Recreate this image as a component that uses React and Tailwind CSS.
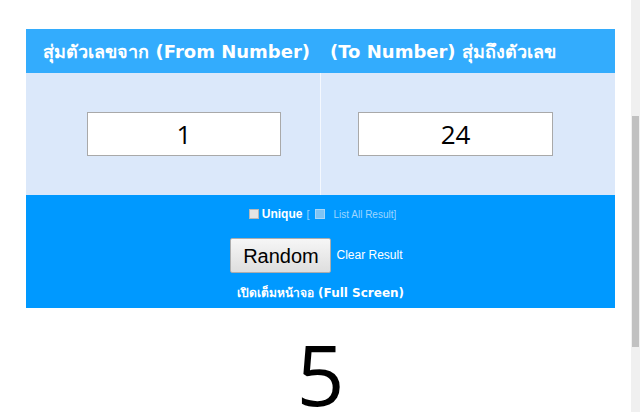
import React, { useState } from 'react';

// Random number picker — from/to inputs, options and the drawn result
export default function App() {
  const [from, setFrom] = useState('1');
  const [to, setTo] = useState('24');
  const [unique, setUnique] = useState(false);
  const [result, setResult] = useState(5);

  function roll() {
    const a = parseInt(from, 10) || 0;
    const b = parseInt(to, 10) || 0;
    const lo = Math.min(a, b);
    const hi = Math.max(a, b);
    setResult(lo + Math.floor(Math.random() * (hi - lo + 1)));
  }

  return (
    <div className="w-[640px] h-[412px] flex overflow-hidden bg-white font-['Liberation_Sans','DejaVu_Sans',sans-serif]">
      {/* ── Page ─────────────────────────────────────────── */}
      <div className="flex-1 pt-[29px] pl-[26px] pr-[16px]">
        <div className="w-[589px]">

          {/* Header row */}
          <div className="grid grid-cols-[294px_295px] h-[44px] bg-[#33acfd] text-white font-bold text-[18px] font-['Tahoma','DejaVu_Sans',sans-serif]">
            <div className="flex items-center justify-end pr-[10px]">สุ่มตัวเลขจาก (From Number)</div>
            <div className="flex items-center pl-[10px]">(To Number) สุ่มถึงตัวเลข</div>
          </div>

          {/* Inputs row */}
          <div className="grid grid-cols-[294px_1px_294px] h-[122px] bg-[#dbe8fa]">
            <div className="flex items-center justify-end pr-[39px]">
              <input
                value={from}
                onChange={e => setFrom(e.target.value)}
                className="w-[194px] h-[44px] border border-[#a9a9a9] bg-white text-center text-[26px] text-black outline-none font-['Open_Sans',sans-serif]"
              />
            </div>
            <div className="bg-[#f4f8fe]" />
            <div className="flex items-center pl-[37px]">
              <input
                value={to}
                onChange={e => setTo(e.target.value)}
                className="w-[195px] h-[44px] border border-[#a9a9a9] bg-white text-center text-[26px] text-black outline-none font-['Open_Sans',sans-serif]"
              />
            </div>
          </div>

          {/* Controls row */}
          <div className="h-[113px] bg-[#0099ff] flex flex-col items-center pt-[12px] text-white">
            <div className="flex items-center h-[14px] pl-[4px]">
              <input
                type="checkbox"
                checked={unique}
                onChange={e => setUnique(e.target.checked)}
                className="appearance-none w-[10px] h-[10px] m-0 mr-[3px] bg-[#e4e4e4] border border-[#b8b8b8] checked:bg-white"
              />
              <span className="text-[12px] font-bold">Unique</span>
              <span className="text-[11px] text-[#8fd0ff] ml-[4px]">[</span>
              <span className="w-[10px] h-[10px] ml-[6px] mr-[8px] bg-[#7fc4f4] border border-[#a8d6f7]" />
              <span className="text-[10px] text-[#9fd6ff]">List All Result]</span>
            </div>
            <div className="flex items-end mt-[17px] pr-[8px]">
              <button
                onClick={roll}
                className="w-[101px] h-[35px] border border-[#adadad] rounded-[2px] bg-gradient-to-b from-[#f6f6f6] to-[#dedede] text-black text-[20px] leading-none"
              >
                Random
              </button>
              <button className="ml-[5px] mb-[9px] text-[12px] text-white">Clear Result</button>
            </div>
            <div className="mt-[11px] text-[12px] font-bold font-['Tahoma','DejaVu_Sans',sans-serif]">
              เปิดเต็มหน้าจอ (Full Screen)
            </div>
          </div>
        </div>

        {/* Result */}
        <div className="w-[589px] flex justify-center pt-[35px]">
          <span className="text-[84px] leading-[62px] h-[62px] text-black font-['Open_Sans',sans-serif]">{result}</span>
        </div>
      </div>

      {/* ── Scrollbar ────────────────────────────────────── */}
      <div className="w-[9px] h-full bg-[#f0f0f0] pt-[116px] px-px">
        <div className="h-[231px] bg-[#c1c1c1]" />
      </div>
    </div>
  );
}
